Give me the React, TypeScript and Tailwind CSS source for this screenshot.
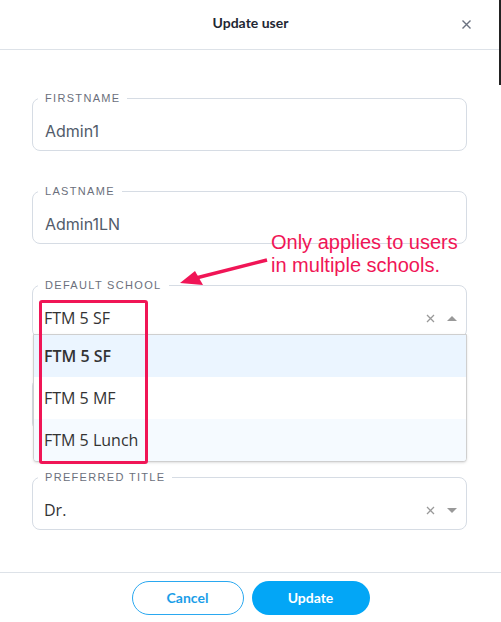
import React from "react";

const RED = "#f01556";

function Field({
  label,
  children,
}: {
  label?: string;
  children: React.ReactNode;
}) {
  return (
    <fieldset className="rounded-lg border border-[#d6dce4] pl-[5px] pr-0">
      <legend
        className={`h-[14px] font-['Liberation_Sans',sans-serif] text-[11px] leading-[14px] tracking-[0.12em] text-[#6b6f7c] ${
          label ? "px-[7px]" : "px-0"
        }`}
      >
        {label}
      </legend>
      <div className="flex h-[45px] items-center pt-[7px]">{children}</div>
    </fieldset>
  );
}

function TextValue({ value }: { value: string }) {
  return (
    <span className="ml-[7px] font-['Inter',sans-serif] text-[16px] text-[#525c6b]">
      {value}
    </span>
  );
}

function SelectValue({ value, open }: { value?: string; open?: boolean }) {
  return (
    <div className="flex w-full items-center pr-[9px]">
      <span className="ml-[6px] flex-1 font-['Open_Sans',sans-serif] text-[16px] text-[#333]">
        {value}
      </span>
      <svg width="9" height="9" viewBox="0 0 9 9" className="mr-[12px]">
        <path d="M1 1L8 8M8 1L1 8" stroke="#999" strokeWidth="1.3" />
      </svg>
      <svg width="10" height="5" viewBox="0 0 10 5">
        {open ? (
          <path d="M0 5L5 0L10 5Z" fill="#999" />
        ) : (
          <path d="M0 0L5 5L10 0Z" fill="#999" />
        )}
      </svg>
    </div>
  );
}

const OPTIONS = [
  { label: "FTM 5 SF", bg: "bg-[#ebf5ff]", weight: "font-semibold" },
  { label: "FTM 5 MF", bg: "bg-white", weight: "font-normal" },
  { label: "FTM 5 Lunch", bg: "bg-[#f5faff]", weight: "font-normal" },
];

export default function App() {
  return (
    <div className="relative flex h-[622px] w-[501px] flex-col overflow-hidden bg-white">
      <header className="relative flex h-[50px] items-center justify-center border-b border-[#dde2e8] pb-1">
        <h1 className="font-['Lato',sans-serif] text-[14px] font-bold text-[#1f2733]">
          Update user
        </h1>
        <button className="absolute right-[30px] top-[20px]">
          <svg width="9" height="9" viewBox="0 0 9 9">
            <path d="M0.5 0.5L8.5 8.5M8.5 0.5L0.5 8.5" stroke="#6b7280" strokeWidth="1.4" />
          </svg>
        </button>
      </header>

      <div className="flex flex-1 flex-col gap-[33px] pl-8 pr-[34px] pt-[41px]">
        <Field label="FIRSTNAME">
          <TextValue value="Admin1" />
        </Field>
        <Field label="LASTNAME">
          <TextValue value="Admin1LN" />
        </Field>
        <div className="relative mt-px">
          <Field label="DEFAULT SCHOOL">
            <SelectValue value="FTM 5 SF" open />
          </Field>
          <ul className="absolute left-[1px] right-0 top-[56px] z-10 overflow-hidden rounded-b border border-[#cfcfcf] bg-white shadow-sm">
            {OPTIONS.map((o) => (
              <li
                key={o.label}
                className={`flex h-[42px] items-center pl-[10px] font-['Open_Sans',sans-serif] text-[16px] text-[#333] ${o.bg} ${o.weight}`}
              >
                {o.label}
              </li>
            ))}
          </ul>
        </div>
        <Field>
          <SelectValue />
        </Field>
        <div className="mt-[6px]">
          <Field label="PREFERRED TITLE">
            <SelectValue value="Dr." />
          </Field>
        </div>
      </div>

      <footer className="flex h-[50px] items-center justify-center gap-2 border-t border-[#dde2e8]">
        <button className="h-[34px] w-[112px] rounded-full border border-[#2aa8f0] font-['Lato',sans-serif] text-[14px] font-bold text-[#1a9ee8]">
          Cancel
        </button>
        <button className="h-[34px] w-[118px] rounded-full bg-[#03a6f6] font-['Lato',sans-serif] text-[14px] font-bold text-white">
          Update
        </button>
      </footer>

      {/* annotation overlay */}
      <div
        className="absolute left-[271px] top-[231px] z-20 font-['Liberation_Sans',sans-serif] text-[20px] leading-[23px]"
        style={{ color: RED }}
      >
        Only applies to users
        <br />
        in multiple schools.
      </div>
      <svg
        className="absolute left-0 top-0 z-20"
        width="501"
        height="622"
        viewBox="0 0 501 622"
        pointerEvents="none"
      >
        <line x1="267" y1="260" x2="196" y2="278" stroke={RED} strokeWidth="3.5" />
        <path d="M180 283L195 271L203 285Z" fill={RED} />
        <rect x="40.5" y="301.5" width="106" height="161" rx="1.5" fill="none" stroke={RED} strokeWidth="3" />
      </svg>
      <div className="absolute right-0 top-0 h-[85px] w-[2px] bg-[#222]" />
    </div>
  );
}
